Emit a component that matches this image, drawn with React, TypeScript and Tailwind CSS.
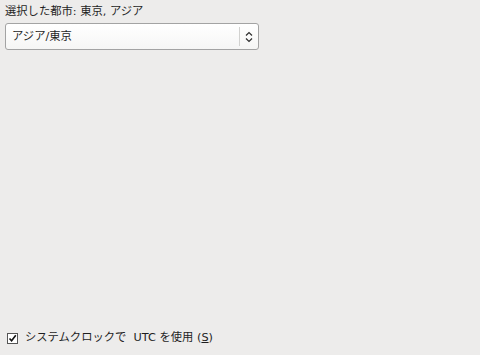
export default function App() {
  return (
    <div
      className="flex h-[355px] w-[480px] flex-col bg-[#edeceb] px-[5px] pt-[4px] pb-[9px] text-[11.3px] text-[#1e1e1e]"
      style={{ fontFamily: '"DejaVu Sans", "Noto Sans CJK JP", sans-serif' }}
    >
      <div className="leading-[16px]">選択した都市: 東京, アジア</div>
      <div className="mt-[3px] flex h-[27px] w-[254px] items-center rounded-[3px] border border-[#a3a3a3] bg-gradient-to-b from-white to-[#f6f6f5]">
        <div className="flex-1 pl-[6px] leading-[16px]">アジア/東京</div>
        <div className="h-[19px] w-px bg-[#d2d2d0]" />
        <div className="flex w-[18px] items-center justify-center">
          <svg width="8" height="12" viewBox="0 0 8 12" fill="none" stroke="#2e2e2e" strokeWidth="1.2">
            <path d="M1 4.5 L4 1.5 L7 4.5" />
            <path d="M1 7.5 L4 10.5 L7 7.5" />
          </svg>
        </div>
      </div>
      <div className="flex-1" />
      <div className="flex items-center gap-[7px] pl-[2px]">
        <div className="flex h-[11px] w-[11px] items-center justify-center border border-[#555] bg-white">
          <svg width="9" height="9" viewBox="0 0 9 9" fill="none" stroke="#111" strokeWidth="1.6">
            <path d="M1.5 4.5 L3.6 6.8 L7.8 1.2" />
          </svg>
        </div>
        <span className="leading-[16px] whitespace-pre">
          システムクロックで  UTC を使用 (<span className="underline">S</span>)
        </span>
      </div>
    </div>
  );
}
